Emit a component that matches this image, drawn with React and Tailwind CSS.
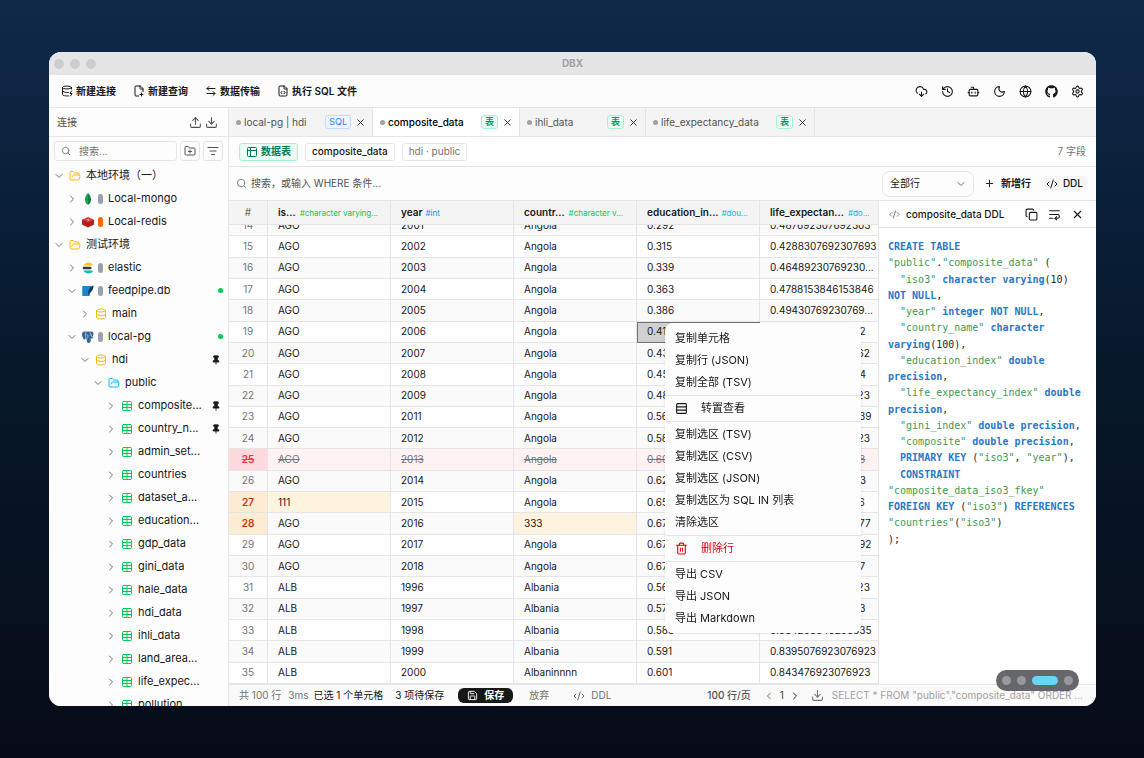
import { useLayoutEffect, useRef } from "react";
import {
  ArrowLeftRight,
  Bot,
  ChevronDown,
  ChevronLeft,
  ChevronRight,
  CloudDownload,
  CodeXml,
  Copy,
  Database,
  DatabaseZap,
  Download,
  FileCode,
  FilePlus2,
  FolderOpen,
  FolderPlus,
  Globe,
  History,
  ListFilter,
  Moon,
  Pin,
  Plus,
  Rows3,
  Save,
  Search,
  Settings,
  Table,
  Trash2,
  Upload,
  WrapText,
  X,
} from "lucide-react";
import { FaGithub } from "react-icons/fa";

// ---------- Data ----------
const TREE = [
  { label: "本地环境（一）", pad: "pl-1", open: true, icon: "folder" },
  { label: "Local-mongo", pad: "pl-[17px]", icon: "mongo", bar: "bg-gray-400" },
  { label: "Local-redis", pad: "pl-[17px]", icon: "redis", bar: "bg-orange-500" },
  { label: "测试环境", pad: "pl-1", open: true, icon: "folder" },
  { label: "elastic", pad: "pl-[17px]", icon: "elastic", bar: "bg-gray-400" },
  { label: "feedpipe.db", pad: "pl-[17px]", open: true, icon: "sqlite", bar: "bg-gray-400", online: true },
  { label: "main", pad: "pl-[30px]", icon: "db" },
  { label: "local-pg", pad: "pl-[17px]", open: true, icon: "pg", bar: "bg-gray-400", online: true },
  { label: "hdi", pad: "pl-[30px]", open: true, icon: "db", pinned: true },
  { label: "public", pad: "pl-[43px]", open: true, icon: "schema" },
  { label: "composite...", pad: "pl-[56px]", icon: "table", pinned: true },
  { label: "country_n...", pad: "pl-[56px]", icon: "table", pinned: true },
  { label: "admin_set...", pad: "pl-[56px]", icon: "table" },
  { label: "countries", pad: "pl-[56px]", icon: "table" },
  { label: "dataset_a...", pad: "pl-[56px]", icon: "table" },
  { label: "education...", pad: "pl-[56px]", icon: "table" },
  { label: "gdp_data", pad: "pl-[56px]", icon: "table" },
  { label: "gini_data", pad: "pl-[56px]", icon: "table" },
  { label: "hale_data", pad: "pl-[56px]", icon: "table" },
  { label: "hdi_data", pad: "pl-[56px]", icon: "table" },
  { label: "ihli_data", pad: "pl-[56px]", icon: "table" },
  { label: "land_area...", pad: "pl-[56px]", icon: "table" },
  { label: "life_expec...", pad: "pl-[56px]", icon: "table" },
  { label: "pollution_...", pad: "pl-[56px]", icon: "table" },
];

const TABS = [
  { label: "local-pg | hdi", badge: "SQL", width: "w-36" },
  { label: "composite_data", badge: "表", width: "w-[147px]", active: true },
  { label: "ihli_data", badge: "表", width: "w-[126px]" },
  { label: "life_expectancy_data", badge: "表", width: "w-[169px]" },
];

const COLUMNS = [
  { name: "is...", type: "#character varying...", color: "text-green-500", width: "w-[123px]", gap: "gap-1" },
  { name: "year", type: "#int", color: "text-blue-500", width: "w-[123px]", gap: "gap-[3px]" },
  { name: "countr...", type: "#character v...", color: "text-green-500", width: "w-[123px]", gap: "gap-1" },
  { name: "education_in...", type: "#dou...", color: "text-cyan-500", width: "w-[123px]", gap: "gap-[3px]" },
  { name: "life_expectan...", type: "#do...", color: "text-cyan-500", width: "", gap: "gap-1" },
];

const ROWS = [
  [14, "AGO", "2001", "Angola", "0.292", "0.487692307692303"],
  [15, "AGO", "2002", "Angola", "0.315", "0.4288307692307693"],
  [16, "AGO", "2003", "Angola", "0.339", "0.46489230769230..."],
  [17, "AGO", "2004", "Angola", "0.363", "0.4788153846153846"],
  [18, "AGO", "2005", "Angola", "0.386", "0.49430769230769..."],
  [19, "AGO", "2006", "Angola", "0.41", "0.511230769230762"],
  [20, "AGO", "2007", "Angola", "0.433", "0.526676923076962"],
  [21, "AGO", "2008", "Angola", "0.457", "0.54353846253844"],
  [22, "AGO", "2009", "Angola", "0.48", "0.558830769230723"],
  [23, "AGO", "2011", "Angola", "0.566", "0.585869230869239"],
  [24, "AGO", "2012", "Angola", "0.583", "0.586830769230723"],
  [25, "AGO", "2013", "Angola", "0.601", "0.59569230869238"],
  [26, "AGO", "2014", "Angola", "0.622", "0.60425384645383"],
  [27, "111", "2015", "Angola", "0.655", "0.60907692308696"],
  [28, "AGO", "2016", "333", "0.671", "0.628230869230877"],
  [29, "AGO", "2017", "Angola", "0.672", "0.623230869230892"],
  [30, "AGO", "2018", "Angola", "0.673", "0.62838465538467"],
  [31, "ALB", "1996", "Albania", "0.562", "0.828676923076923"],
  [32, "ALB", "1997", "Albania", "0.573", "0.82235384645383"],
  [33, "ALB", "1998", "Albania", "0.583", "0.834253846253835"],
  [34, "ALB", "1999", "Albania", "0.591", "0.8395076923076923"],
  [35, "ALB", "2000", "Albaninnnn", "0.601", "0.843476923076923"],
];

const DELETED_ROW = 25;
const SELECTED_CELL = "19:3";
const EDITED_CELLS = ["27:0", "28:2"];

const MENU = [
  [{ label: "复制单元格" }, { label: "复制行 (JSON)" }, { label: "复制全部 (TSV)" }],
  [{ label: "转置查看", icon: Rows3 }],
  [
    { label: "复制选区 (TSV)" },
    { label: "复制选区 (CSV)" },
    { label: "复制选区 (JSON)" },
    { label: "复制选区为 SQL IN 列表" },
    { label: "清除选区" },
  ],
  [{ label: "删除行", icon: Trash2, danger: true }],
  [{ label: "导出 CSV" }, { label: "导出 JSON" }, { label: "导出 Markdown" }],
];

const DDL = `CREATE TABLE
"public"."composite_data" (
  "iso3" character varying(10)
NOT NULL,
  "year" integer NOT NULL,
  "country_name" character
varying(100),
  "education_index" double
precision,
  "life_expectancy_index" double
precision,
  "gini_index" double precision,
  "composite" double precision,
  PRIMARY KEY ("iso3", "year"),
  CONSTRAINT
"composite_data_iso3_fkey"
FOREIGN KEY ("iso3") REFERENCES
"countries"("iso3")
);`;

// ---------- Small pieces ----------
function NodeIcon({ kind }) {
  switch (kind) {
    case "folder":
      return <FolderOpen size={12} className="text-amber-400" />;
    case "schema":
      return <FolderOpen size={12} className="text-sky-400" />;
    case "db":
      return <Database size={12} className="text-amber-400" />;
    case "table":
      return <Table size={12} className="text-green-500" />;
    case "pg":
      return (
        <svg width="12" height="12" viewBox="0 0 24 24">
          <path
            d="M5 1C2 1 0 3 0 6c0 4 2 10 4 11 1.500.5 2.500-1 3.500-2 .5.500 1 .8 2 .8V20c0 2 1.500 4 4 4s4-2 4-5v-4c3 .3 5-.5 6-1.500-1.500 0-2.500-.2-3-.8C22.500 9 24 5 22.500 3 20.500.5 17 .5 14.500 1.300 11.500.5 9.500 1 8 1.600 7 1.200 6 1 5 1z"
            fill="#336791"
          />
          <path
            d="M8 2C6.500 5 6.500 9 7.500 15M15 2c2.500 2 4 5 4.500 10M8 8c2-1 4-.5 4 2s-1 4-2 5.500M15 8.500c1-.7 2-.7 3-.3"
            stroke="#dbe7f1"
            strokeWidth="1.200"
            fill="none"
          />
        </svg>
      );
    case "mongo":
      return (
        <svg width="12" height="12" viewBox="0 0 24 24">
          <path d="M12 0C8 4 6 8 6 13c0 5 2 8 5 10l1 1z" fill="#13a451" />
          <path d="M12 0c4 4 6 8 6 13 0 5-2 8-5 10l-1 1z" fill="#0b8443" />
        </svg>
      );
    case "redis":
      return (
        <svg width="12" height="12" viewBox="0 0 24 24">
          <path d="M0 8v9l12 6 12-6V8z" fill="#a41e1f" />
          <path d="M0 13l12 5 12-5" stroke="#c6302b" strokeWidth="1" fill="none" />
          <path d="M12 2l12 5.500-12 6L0 7.500z" fill="#d33a31" />
          <path d="M8 7l3 .5 1-2 1 2 3 .3-3 1.400z" fill="#fff" />
        </svg>
      );
    case "elastic":
      return (
        <svg width="12" height="12" viewBox="0 0 24 24">
          <path d="M3 7C5 3 9 1 13 1c4 0 7 2 9 4.500-1 1-2 1.500-4 1.500z" fill="#fec514" />
          <path d="M2 9.500h14.500a2.500 2.500 0 0 1 0 5H2c-.6-1.600-.6-3.400 0-5z" fill="#343741" />
          <path d="M3 17h15c2 0 3 .5 4 1.500C20 21 17 23 13 23c-4 0-8-2-10-6z" fill="#00bfb3" />
        </svg>
      );
    default:
      return (
        <svg width="12" height="12" viewBox="0 0 24 24">
          <path d="M2 2h17l-4 20H2a1.500 1.500 0 0 1-1.500-1.500v-17A1.500 1.500 0 0 1 2 2z" fill="#1b86c9" />
          <path d="M23 1c-5 1-9 7-10 12l-1 10c1-3 2-5 3-7 4-1 8-8 8-15z" fill="#0b3954" />
        </svg>
      );
  }
}

function GridIcon() {
  return (
    <svg width="12" height="12" viewBox="0 0 24 24" fill="none" stroke="currentColor" strokeWidth="2">
      <rect x="3" y="3" width="18" height="18" rx="2" />
      <path d="M3 9h18M9 3v18" />
    </svg>
  );
}

function IconButton({ label, children, className = "" }) {
  return (
    <button aria-label={label} className={`flex shrink-0 items-center justify-center ${className}`}>
      {children}
    </button>
  );
}

function TypeBadge({ text }) {
  const color =
    text === "SQL"
      ? "border-blue-200 bg-blue-50 text-blue-500"
      : "border-emerald-200 bg-emerald-50 text-emerald-600 font-semibold";
  return <span className={`rounded-[3px] border px-[3px] text-[9px] leading-3 ${color}`}>{text}</span>;
}

// ---------- Window parts ----------
function Toolbar() {
  const actions = [
    [DatabaseZap, "新建连接"],
    [FilePlus2, "新建查询"],
    [ArrowLeftRight, "数据传输"],
    [FileCode, "执行 SQL 文件"],
  ];
  const tools = [
    [CloudDownload, "更新"],
    [History, "历史"],
    [Bot, "助手"],
    [Moon, "主题"],
    [Globe, "语言"],
    [FaGithub, "GitHub"],
    [Settings, "设置"],
  ];
  return (
    <div className="flex h-[33px] shrink-0 items-center justify-between border-b border-neutral-200 bg-[#fcfcfc] pr-3 pl-3">
      <div className="flex gap-[17px]">
        {actions.map(([Icon, label]) => (
          <button key={label} className="flex items-center gap-[3px] text-[10px] font-semibold">
            <Icon size={12} />
            {label}
          </button>
        ))}
      </div>
      <div className="flex gap-[13px]">
        {tools.map(([Icon, label]) => (
          <IconButton key={label} label={label}>
            <Icon size={13} />
          </IconButton>
        ))}
      </div>
    </div>
  );
}

function TreeRow({ node }) {
  const Chevron = node.open ? ChevronDown : ChevronRight;
  return (
    <li className={`flex h-[23px] items-center pr-1 ${node.pad}`}>
      <Chevron size={12} className="mr-[3px] shrink-0 text-neutral-500" />
      <span className="flex w-[13px] shrink-0 justify-center">
        <NodeIcon kind={node.icon} />
      </span>
      {node.bar && <span className={`ml-1 h-[10px] w-[5px] shrink-0 rounded-sm ${node.bar}`} />}
      <span className="ml-[5px] flex-1 whitespace-nowrap">{node.label}</span>
      {node.online && <span className="mr-px size-[5px] rounded-full bg-green-500" />}
      {node.pinned && <Pin size={10} fill="currentColor" className="mr-[3px] shrink-0" />}
    </li>
  );
}

function Sidebar() {
  return (
    <aside className="flex w-[180px] shrink-0 flex-col border-r border-neutral-200 bg-[#fdfdfd]">
      <div className="flex h-[29px] shrink-0 items-center border-b border-neutral-200 pr-[10px] pl-2">
        <span className="flex-1 text-[10px] text-neutral-600">连接</span>
        <IconButton label="导出" className="mr-[3px] text-neutral-600">
          <Upload size={13} />
        </IconButton>
        <IconButton label="导入" className="text-neutral-600">
          <Download size={13} />
        </IconButton>
      </div>
      <div className="flex shrink-0 items-center gap-[3px] pt-1 pr-[5px] pb-[3px] pl-[5px]">
        <label className="flex h-5 min-w-0 flex-1 items-center gap-2 rounded-[3px] border border-neutral-200 pl-[6px]">
          <Search size={10} className="shrink-0 text-neutral-500" />
          <input
            aria-label="搜索连接"
            placeholder="搜索..."
            className="w-full min-w-0 text-[10px] outline-none placeholder:text-neutral-500"
          />
        </label>
        <IconButton label="新建分组" className="size-5 rounded-[3px] border border-neutral-200 text-neutral-600">
          <FolderPlus size={12} />
        </IconButton>
        <IconButton label="筛选" className="size-5 rounded-[3px] border border-neutral-200 text-neutral-600">
          <ListFilter size={12} />
        </IconButton>
      </div>
      <ul className="min-h-0 flex-1 overflow-hidden text-[11px] text-neutral-900">
        {TREE.map((node) => (
          <TreeRow key={node.label} node={node} />
        ))}
      </ul>
    </aside>
  );
}

function TabBar() {
  return (
    <div className="flex h-[29px] shrink-0 border-b border-neutral-200 bg-[#f4f4f4]">
      {TABS.map((tab) => (
        <div
          key={tab.label}
          className={`flex shrink-0 items-center border-r border-neutral-200 pr-[6px] pl-[7px] ${tab.width} ${
            tab.active ? "bg-white font-medium text-black" : "text-neutral-600"
          }`}
        >
          <span className="mr-[3px] size-[5px] shrink-0 rounded-full bg-neutral-400" />
          <button className="flex-1 text-left whitespace-nowrap">{tab.label}</button>
          <TypeBadge text={tab.badge} />
          <IconButton label={`关闭 ${tab.label}`} className="ml-1 text-neutral-800">
            <X size={11} />
          </IconButton>
        </div>
      ))}
    </div>
  );
}

function FilterBar() {
  return (
    <div className="flex h-[34px] shrink-0 items-center border-b border-neutral-200 bg-[#fdfdfd] pr-2 pl-[7px]">
      <label className="flex flex-1 items-center gap-1">
        <Search size={11} className="shrink-0 text-neutral-500" />
        <input
          aria-label="筛选条件"
          placeholder="搜索，或输入 WHERE 条件..."
          className="flex-1 outline-none placeholder:text-neutral-600"
        />
      </label>
      <div className="relative">
        <select
          aria-label="行范围"
          className="h-[26px] w-[92px] appearance-none rounded-lg border border-neutral-200 pl-[7px] outline-none"
        >
          <option>全部行</option>
        </select>
        <ChevronDown size={12} className="pointer-events-none absolute top-[7px] right-[7px] text-neutral-500" />
      </div>
      <button className="ml-[10px] flex items-center gap-[6px] font-semibold">
        <Plus size={11} />
        新增行
      </button>
      <button className="ml-[10px] flex h-[15px] items-center gap-[5px] rounded bg-neutral-100 px-[5px] font-medium">
        <CodeXml size={12} />
        DDL
      </button>
    </div>
  );
}

function cellTone(id, col) {
  const key = `${id}:${col}`;
  if (key === SELECTED_CELL) return "bg-[#d0d0d0] outline outline-1 -outline-offset-1 outline-neutral-500";
  if (EDITED_CELLS.includes(key)) return "bg-[#fdf3df]";
  return "";
}

function DataGrid() {
  const scroller = useRef(null);

  useLayoutEffect(() => {
    scroller.current.scrollTop = scroller.current.scrollHeight;
  }, []);

  return (
    <div ref={scroller} className="min-w-0 flex-1 overflow-hidden">
      <table className="h-[493px] w-full table-fixed border-separate border-spacing-0 text-left">
        <thead className="sticky top-0 z-10 bg-[#f4f4f4]">
          <tr className="h-6">
            <th className="w-[39px] border-r border-b border-neutral-200 text-center font-medium text-neutral-500">#</th>
            {COLUMNS.map((col) => (
              <th key={col.name} className={`border-r border-b border-neutral-200 p-0 pl-[10px] ${col.width}`}>
                <div className={`flex items-center overflow-hidden whitespace-nowrap ${col.gap}`}>
                  <span className="font-semibold">{col.name}</span>
                  <span className={`text-[8px] font-normal ${col.color}`}>{col.type}</span>
                </div>
              </th>
            ))}
          </tr>
        </thead>
        <tbody>
          {ROWS.map(([id, ...cells]) => {
            const deleted = id === DELETED_ROW;
            const edited = EDITED_CELLS.some((key) => key.startsWith(`${id}:`));
            let tone = id % 2 ? "bg-white" : "bg-[#fafafa]";
            if (deleted) tone = "bg-[#fff2f3] text-neutral-500 line-through";
            let idTone = "text-neutral-500";
            if (deleted) idTone = "bg-[#ffdadc] font-semibold text-red-500";
            if (edited) idTone = "bg-[#fdecd3] font-semibold text-orange-700";
            return (
              <tr key={id} className={tone}>
                <td className={`border-r border-b border-neutral-200 p-0 text-center ${idTone}`}>{id}</td>
                {cells.map((value, col) => (
                  <td
                    key={col}
                    className={`overflow-hidden border-r border-b border-neutral-200 p-0 pl-[10px] whitespace-nowrap ${cellTone(id, col)}`}
                  >
                    {value}
                  </td>
                ))}
              </tr>
            );
          })}
        </tbody>
      </table>
    </div>
  );
}

function DdlLine({ line }) {
  // strings are green, words of the SQL grammar blue, the rest stays dark
  return line.split(/("[^"]*"|[A-Za-z]+)/).map((token, i) => {
    if (token.startsWith('"')) {
      return (
        <span key={i} className="text-[#3f9a50]">
          {token}
        </span>
      );
    }
    if (/^[A-Za-z]/.test(token)) {
      return (
        <span key={i} className="font-bold text-[#2a78c8]">
          {token}
        </span>
      );
    }
    return token;
  });
}

function DdlPanel() {
  return (
    <section className="flex w-[217px] shrink-0 flex-col bg-white">
      <div className="flex h-[27px] shrink-0 items-center border-b border-neutral-200 pr-3 pl-[10px]">
        <CodeXml size={11} className="text-neutral-500" />
        <h2 className="ml-[6px] flex-1 font-medium">composite_data DDL</h2>
        <IconButton label="复制">
          <Copy size={13} />
        </IconButton>
        <IconButton label="自动换行" className="ml-[10px]">
          <WrapText size={13} />
        </IconButton>
        <IconButton label="关闭面板" className="ml-[10px]">
          <X size={13} />
        </IconButton>
      </div>
      <pre className="overflow-hidden pt-[11px] pl-[9px] font-['DejaVu_Sans_Mono','Liberation_Mono',monospace] text-[10px] leading-relaxed text-neutral-800">
        {DDL.split("\n").map((line, i) => (
          <div key={i}>
            <DdlLine line={line} />
          </div>
        ))}
      </pre>
    </section>
  );
}

function StatusBar() {
  return (
    <footer className="flex h-[22px] shrink-0 items-center border-t border-neutral-200 bg-[#fafafa] pr-[13px] pl-[10px] whitespace-nowrap text-neutral-500">
      <span>共 100 行</span>
      <span className="ml-[7px]">3ms</span>
      <span className="ml-[5px] text-neutral-900">已选 1 个单元格</span>
      <span className="ml-3 text-neutral-900">3 项待保存</span>
      <button className="ml-[14px] flex h-[15px] items-center gap-[6px] rounded-md bg-neutral-900 px-[9px] font-semibold text-white">
        <Save size={11} />
        保存
      </button>
      <button className="ml-4">放弃</button>
      <button className="ml-6 flex items-center gap-[6px]">
        <CodeXml size={12} />
        DDL
      </button>
      <span className="ml-auto font-medium text-neutral-600">100 行/页</span>
      <IconButton label="上一页" className="ml-3">
        <ChevronLeft size={12} />
      </IconButton>
      <span className="mx-[5px] text-neutral-700">1</span>
      <IconButton label="下一页" className="text-neutral-800">
        <ChevronRight size={12} />
      </IconButton>
      <IconButton label="下载" className="mr-2 ml-[10px]">
        <Download size={13} />
      </IconButton>
      <span className="text-neutral-400">SELECT * FROM "public"."composite_data" ORDER ...</span>
    </footer>
  );
}

function ContextMenu() {
  return (
    <div
      role="menu"
      className="absolute top-[271px] left-[616px] z-20 w-[196px] rounded-lg bg-[#fdfdfd] py-1 text-[11px] text-neutral-900 shadow-sm"
    >
      {MENU.map((group, g) => (
        <div key={g} className={g > 0 ? "mt-0.5 border-t border-neutral-200 pt-px" : ""}>
          {group.map(({ label, icon: Icon, danger }) => (
            <button
              key={label}
              role="menuitem"
              className={`flex h-[22px] w-full items-center px-[10px] ${danger ? "text-red-600" : ""}`}
            >
              {Icon && <Icon size={13} className="mr-[13px]" />}
              {label}
            </button>
          ))}
        </div>
      ))}
    </div>
  );
}

export default function App() {
  return (
    <div className="relative h-screen bg-linear-to-b from-[#10294a] via-[#06182a] to-[#070b18] py-[52px] pr-12 pl-[49px] font-[Inter,'Noto_Sans_CJK_SC',sans-serif] text-[10px] text-neutral-900">
      <div className="relative flex h-full flex-col overflow-hidden rounded-xl bg-white">
        <header className="flex h-[23px] shrink-0 items-center bg-[#e5e5e7] px-[5px]">
          <div className="flex flex-1 gap-[6px]">
            <span className="size-[10px] rounded-full bg-[#cdcdcf]" />
            <span className="size-[10px] rounded-full bg-[#cdcdcf]" />
            <span className="size-[10px] rounded-full bg-[#cdcdcf]" />
          </div>
          <h1 className="font-bold text-neutral-400">DBX</h1>
          <div className="flex-1" />
        </header>
        <Toolbar />
        <div className="flex min-h-0 flex-1">
          <Sidebar />
          <main className="flex min-w-0 flex-1 flex-col">
            <TabBar />
            <div className="flex h-[30px] shrink-0 items-center gap-[7px] border-b border-neutral-200 pr-[10px] pl-[10px]">
              <span className="flex h-[18px] items-center gap-[3px] rounded-[3px] border border-emerald-200 bg-emerald-50 px-[6px] font-semibold text-emerald-700">
                <GridIcon />
                数据表
              </span>
              <span className="flex h-[18px] items-center rounded-[3px] border border-neutral-200 px-[6px] font-medium">
                composite_data
              </span>
              <span className="flex h-[18px] items-center rounded-[3px] border border-neutral-200 px-[6px] text-neutral-500">
                hdi · public
              </span>
              <span className="ml-auto text-neutral-500">7 字段</span>
            </div>
            <FilterBar />
            <div className="flex min-h-0 flex-1">
              <DataGrid />
              <DdlPanel />
            </div>
            <StatusBar />
          </main>
        </div>
        <ContextMenu />
      </div>
      <nav
        aria-label="幻灯片"
        className="absolute right-[65px] bottom-[67px] z-30 flex h-[21px] items-center gap-[6px] rounded-full bg-[#65676b] px-[6px]"
      >
        <button aria-label="第 1 张" className="size-[9px] rounded-full bg-[#98999c]" />
        <button aria-label="第 2 张" className="size-[9px] rounded-full bg-[#98999c]" />
        <button aria-label="第 3 张" className="h-[9px] w-[26px] rounded-full bg-[#67d5f6]" />
        <button aria-label="第 4 张" className="size-[9px] rounded-full bg-[#98999c]" />
      </nav>
    </div>
  );
}
